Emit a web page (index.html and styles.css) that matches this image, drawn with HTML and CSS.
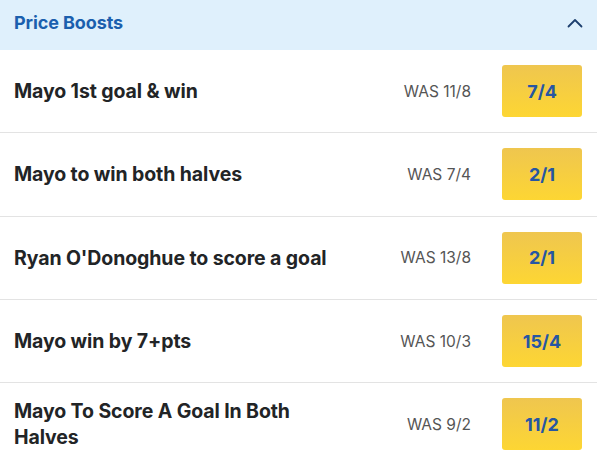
FILE: index.html
```html
<!DOCTYPE html>
<html>
<head>
<meta charset="utf-8">
<link rel="stylesheet" href="styles.css">
</head>
<body>
<section class="boosts">
  <header class="boosts-head">
    <h2 class="boosts-title">Price Boosts</h2>
    <svg class="chev" width="16" height="10" viewBox="0 0 16 10"><path d="M1.5 8.5 L8 2 L14.5 8.5" fill="none" stroke="#1d3f6e" stroke-width="1.8" stroke-linecap="round" stroke-linejoin="round"/></svg>
  </header>
  <div class="row">
    <div class="name">Mayo 1st goal &amp; win</div>
    <div class="was">WAS 11/8</div>
    <button class="odds">7/4</button>
  </div>
  <div class="row">
    <div class="name">Mayo to win both halves</div>
    <div class="was">WAS 7/4</div>
    <button class="odds">2/1</button>
  </div>
  <div class="row">
    <div class="name">Ryan O'Donoghue to score a goal</div>
    <div class="was">WAS 13/8</div>
    <button class="odds">2/1</button>
  </div>
  <div class="row">
    <div class="name">Mayo win by 7+pts</div>
    <div class="was">WAS 10/3</div>
    <button class="odds">15/4</button>
  </div>
  <div class="row row-alt">
    <div class="name">Mayo To Score A Goal In Both Halves</div>
    <div class="was">WAS 9/2</div>
    <button class="odds">11/2</button>
  </div>
</section>
</body>
</html>
```
FILE: styles.css
```css
html, body {
  margin: 0;
  padding: 0;
  background: #fff;
}
body {
  font-family: Inter, "Noto Sans", sans-serif;
  width: 597px;
  height: 459px;
  overflow: hidden;
}
.boosts-head {
  height: 50px;
  background: #dff0fc;
  display: flex;
  align-items: center;
  justify-content: space-between;
  padding: 0 14px 0 14px;
  box-sizing: border-box;
}
.boosts-title {
  margin: 0;
  font-size: 18px;
  font-weight: 700;
  color: #1b5fae;
  letter-spacing: -0.1px;
  padding-bottom: 5px;
}
.chev {
  display: block;
  margin-bottom: 5px;
}
.row {
  display: flex;
  align-items: center;
  padding: 15px 15px 15.35px 14px;
  border-bottom: 1px solid #e3e3e3;
  height: 52px;
  box-sizing: content-box;
}
.name {
  flex: 1;
  font-size: 19.5px;
  font-weight: 700;
  color: #222426;
  line-height: 26px;
  letter-spacing: -0.1px;
}
.was {
  font-size: 15.5px;
  color: #555;
  margin-right: 31px;
}
.odds {
  width: 80px;
  height: 52px;
  border: none;
  border-radius: 3px;
  background: linear-gradient(180deg, #efc64f 0%, #fdd633 100%);
  font-family: Inter, "Noto Sans", sans-serif;
  font-size: 18px;
  font-weight: 700;
  color: #2656a3;
  padding: 0;
}
.row-alt .name {
  flex: 0 1 300px;
  margin-right: auto;
}
```
